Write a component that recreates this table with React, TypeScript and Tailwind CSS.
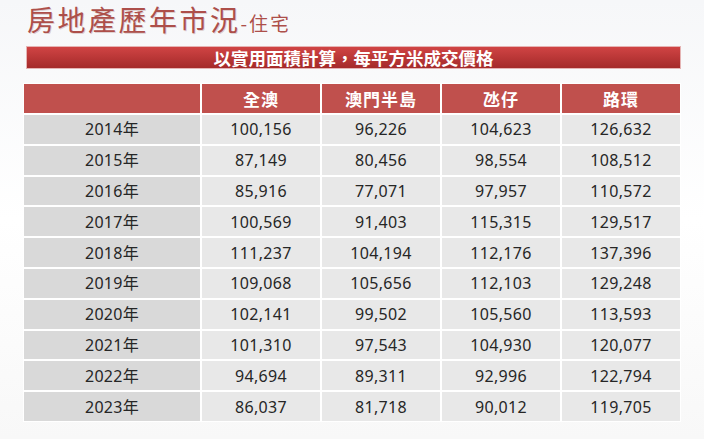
import React from 'react';

const COLUMNS = ['全澳', '澳門半島', '氹仔', '路環'];

const ROWS: [string, string, string, string, string][] = [
  ['2014年', '100,156', '96,226', '104,623', '126,632'],
  ['2015年', '87,149', '80,456', '98,554', '108,512'],
  ['2016年', '85,916', '77,071', '97,957', '110,572'],
  ['2017年', '100,569', '91,403', '115,315', '129,517'],
  ['2018年', '111,237', '104,194', '112,176', '137,396'],
  ['2019年', '109,068', '105,656', '112,103', '129,248'],
  ['2020年', '102,141', '99,502', '105,560', '113,593'],
  ['2021年', '101,310', '97,543', '104,930', '120,077'],
  ['2022年', '94,694', '89,311', '92,996', '122,794'],
  ['2023年', '86,037', '81,718', '90,012', '119,705'],
];

const font = { fontFamily: '"Noto Sans", "Noto Sans CJK TC", sans-serif' };
const cjk = { fontFamily: '"Noto Sans CJK TC", sans-serif' };

export default function App() {
  return (
    <div
      className="w-[704px] h-[439px] overflow-hidden bg-gradient-to-b from-[#f6f7f9] via-white to-[#f8f8f8] text-[#262626]"
      style={font}
    >
      {/* Title */}
      <div className="pl-[27px] h-[46px] flex items-end pb-[13px]">
        <h1
          className="text-[28px] leading-none font-normal tracking-[2.5px] text-[#ad4f4a] [text-shadow:1px_1px_0_rgba(120,40,40,0.2)]"
          style={cjk}
        >
          房地產歷年市況
        </h1>
        <span
          className="text-[19px] leading-none font-normal tracking-[2px] text-[#ad4f4a] mb-[1px]"
          style={cjk}
        >
          -住宅
        </span>
      </div>

      {/* Banner */}
      <div className="ml-[26px] w-[655px] h-[23px] border border-[#e5b4b4] bg-gradient-to-b from-[#d04444] to-[#a52a2a] flex items-center justify-center">
        <span className="text-[17.5px] leading-none font-bold text-white" style={cjk}>
          以實用面積計算，每平方米成交價格
        </span>
      </div>

      {/* Table */}
      <div className="ml-[23px] mt-[14px] w-[658px] bg-white p-[1px] grid grid-cols-[176px_118px_118px_118px_118px] gap-[2px]">
        <div className="h-[29px] bg-[#c0504d]" />
        {COLUMNS.map((c) => (
          <div
            key={c}
            className="h-[29px] bg-[#c0504d] flex items-center justify-center text-[17px] font-bold text-white tracking-[1px]"
            style={cjk}
          >
            {c}
          </div>
        ))}
        {ROWS.map((row) =>
          row.map((cell, i) => (
            <div
              key={row[0] + i}
              className={`h-[28.8px] flex items-center justify-center text-[16px] tracking-[0.3px] ${
                i === 0 ? 'bg-[#d9d9d9]' : 'bg-[#e8e8e8]'
              }`}
            >
              {cell}
            </div>
          ))
        )}
      </div>
    </div>
  );
}
